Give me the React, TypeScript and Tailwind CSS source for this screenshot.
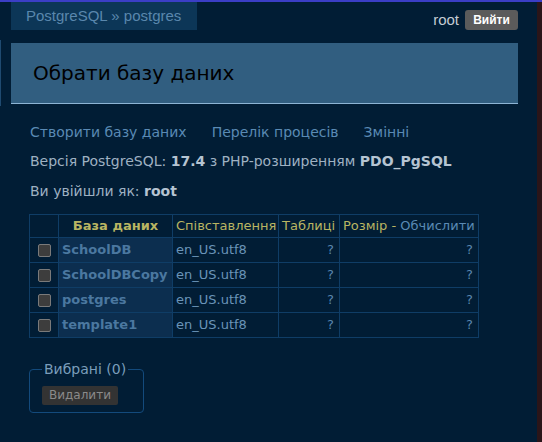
import React from "react";

const rows = ["SchoolDB", "SchoolDBCopy", "postgres", "template1"];

const Checkbox = () => (
  <span className="inline-block h-[13px] w-[13px] rounded-[2px] border border-[#7a7a7a] bg-[#3d3d3d] align-middle" />
);

const App = () => {
  return (
    <div className="flex h-[442px] w-[542px] overflow-hidden border-t-2 border-[#3b3ec6] bg-[#011d35] font-['DejaVu_Sans',sans-serif]">
      <div className="relative flex-1">
        {/* left menu edge */}
        <div className="absolute left-0 top-[38px] h-[66px] w-px bg-[#1f4a70]" />
        {/* top bar */}
        <div className="flex items-start justify-between pl-[11px] pr-[19px]">
          <div className="flex h-[28px] w-[186px] items-center bg-[#0c3657] pl-[15px] font-['Liberation_Sans',sans-serif] text-[15px] text-[#5a87ad]">
            PostgreSQL » postgres
          </div>
          <div className="mt-[7px] flex items-center gap-[6px]">
            <span className="font-['Liberation_Sans',sans-serif] text-[15px] text-[#c4ccd4]">root</span>
            <span className="flex h-[20px] w-[53px] items-center justify-center rounded-[3px] bg-[#5b5b5b] font-['Liberation_Sans',sans-serif] text-[12px] font-bold text-white">
              Вийти
            </span>
          </div>
        </div>
        {/* heading */}
        <div className="ml-[11px] mr-[19px] mt-[11px] flex h-[61px] items-center border-b border-[#8db4d4] bg-[#315e80] pl-[22px]">
          <h2 className="text-[20px] text-black">Обрати базу даних</h2>
        </div>
        {/* content */}
        <div className="pl-[30px] pt-[20px] text-[14px] leading-[17px]">
          <div className="flex gap-[25px] text-[#5a8ab4]">
            <span>Створити базу даних</span>
            <span>Перелік процесів</span>
            <span>Змінні</span>
          </div>
          <div className="mt-[12px] text-[#9fb1c2]">
            Версія PostgreSQL: <b className="text-[#b5c4d2]">17.4</b> з PHP-розширенням{" "}
            <b className="text-[#b5c4d2]">PDO_PgSQL</b>
          </div>
          <div className="mt-[13px] text-[#9fb1c2]">
            Ви увійшли як: <b className="text-[#b5c4d2]">root</b>
          </div>
          <table className="-ml-px mt-[14px] w-[449px] table-fixed border-collapse border border-[#0f3d66] text-[13px] leading-[16px] whitespace-nowrap">
            <colgroup>
              <col className="w-[29px]" />
              <col className="w-[114px]" />
              <col className="w-[106px]" />
              <col className="w-[61px]" />
              <col className="w-[139px]" />
            </colgroup>
            <thead>
              <tr className="h-[23px] text-[#b9b562]">
                <td className="border border-[#0f3d66]" />
                <th className="border border-[#0f3d66] px-[3px] text-center font-bold">База даних</th>
                <td className="border border-[#0f3d66] px-[3px]">Співставлення</td>
                <td className="border border-[#0f3d66] px-[3px]">Таблиці</td>
                <td className="border border-[#0f3d66] px-[3px]">
                  Розмір - <span className="text-[#5a8ab4]">Обчислити</span>
                </td>
              </tr>
            </thead>
            <tbody>
              {rows.map((name) => (
                <tr key={name} className="h-[25px]">
                  <td className="border border-[#0f3d66] text-center">
                    <Checkbox />
                  </td>
                  <th className="border border-[#0f3d66] bg-[#0c2e4f] px-[3px] text-left font-bold text-[#4b78a0]">
                    {name}
                  </th>
                  <td className="border border-[#0f3d66] px-[3px] text-[#6a94b8]">en_US.utf8</td>
                  <td className="border border-[#0f3d66] px-[5px] text-right text-[#5a86ad]">?</td>
                  <td className="border border-[#0f3d66] px-[5px] text-right text-[#5a86ad]">?</td>
                </tr>
              ))}
            </tbody>
          </table>
          <fieldset className="-ml-px mt-[23px] w-[115px] rounded-[4px] border border-[#134a7c] px-[12px] pb-[7px]">
            <legend className="px-[2px] text-[14px] text-[#7b9dbb]">Вибрані (0)</legend>
            <div className="mt-[8px] flex">
              <span className="flex h-[19px] items-center rounded-[2px] bg-[#333333] px-[7px] text-[12px] text-[#8a8a8a]">
                Видалити
              </span>
            </div>
          </fieldset>
        </div>
      </div>
      <div className="w-[5px] bg-[#2a1519]" />
    </div>
  );
};

export default App;
